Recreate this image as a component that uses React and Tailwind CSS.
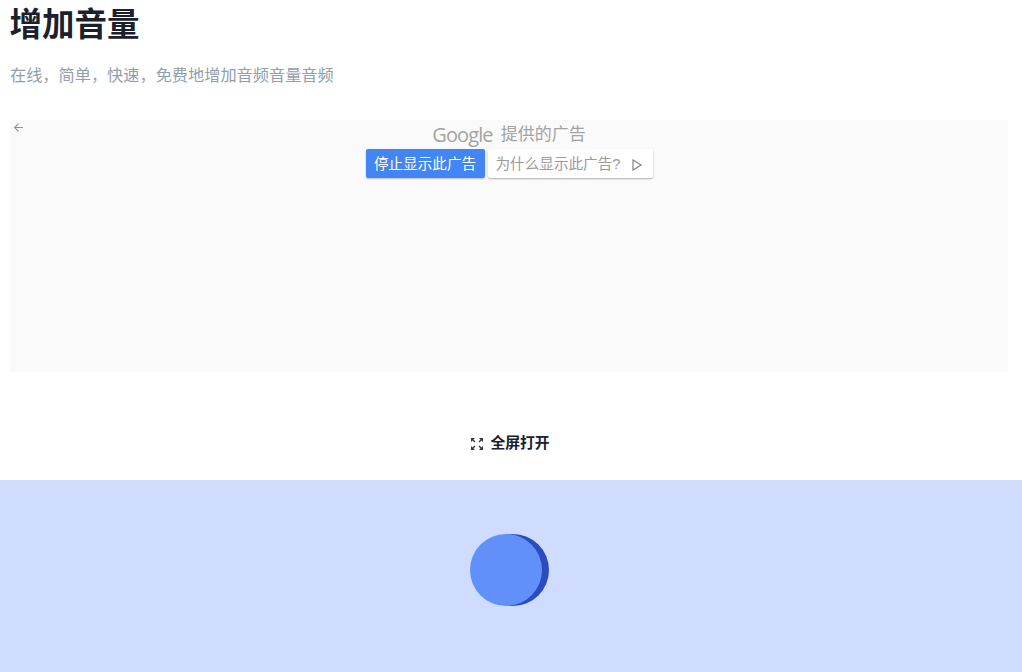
import { MdZoomOutMap } from "react-icons/md";

const cjk = "font-['Liberation_Sans','Noto_Sans_CJK_SC',sans-serif]";

function AdPanel() {
  return (
    <div className="mx-[10px] mt-[33px] w-[998px] h-[252px] bg-[#fafafa] relative flex flex-col items-center">
      <svg className="absolute left-[3px] top-[2px]" width="11" height="11" viewBox="0 0 10 10" fill="none" stroke="#8f8f8f" strokeWidth="1">
        <path d="M9 5H1.500M5 1.500 1.500 5 5 8.500" />
      </svg>
      <div className="h-[29px] flex items-center gap-[8px] text-[#a3a3a3]">
        <span className="font-['Open_Sans',sans-serif] text-[20px] tracking-[-0.9px] leading-none">Google</span>
        <span className="text-[17px] leading-none">提供的广告</span>
      </div>
      <div className="flex gap-[3px]">
        <button type="button" className="w-[119px] h-[29px] pt-[2px] bg-[#4285f4] text-white text-[14.600px] rounded-[2px] shadow-[0_1px_2px_rgba(0,0,0,0.25)]">
          停止显示此广告
        </button>
        <button type="button" className="w-[165px] h-[29px] pt-[2px] bg-white text-[#9a9a9a] text-[14.600px] rounded-[2px] shadow-[0_1px_2px_rgba(0,0,0,0.3)] flex items-center pl-[8px] gap-[12px]">
          <span>为什么显示此广告?</span>
          <svg width="10" height="12" viewBox="0 0 10 12" fill="none" stroke="#8c8c8c" strokeWidth="1.300">
            <path d="M1 1v10l8-5z" />
          </svg>
        </button>
      </div>
    </div>
  );
}

export default function App() {
  return (
    <div className={`${cjk} w-[1022px] h-[672px] overflow-hidden bg-white flex flex-col`}>
      <h1 className="pl-[9.500px] h-[50px] text-[32.500px] leading-[50px] font-bold text-[#1a202c]">增加音量</h1>
      <p className="pl-[10px] mt-[13px] h-[24px] text-[16.200px] leading-[24px] text-[#919eab]">在线，简单，快速，免费地增加音频音量音频</p>
      <AdPanel />
      <div className="h-[108px] flex items-center justify-center gap-[5px] pr-[3px] pt-[35px]">
        <MdZoomOutMap className="text-[#2d3748] w-[16px] h-[16px]" />
        <span className="text-[14.800px] font-bold text-[#1a202c]">全屏打开</span>
      </div>
      <div className="flex-1 bg-[#cfdcfe] flex justify-center pt-[54px]">
        <div className="w-[72px] h-[72px] -ml-[10px] rounded-full bg-[#6190fb] shadow-[7px_0_0_#2a4cc0]" />
      </div>
    </div>
  );
}
